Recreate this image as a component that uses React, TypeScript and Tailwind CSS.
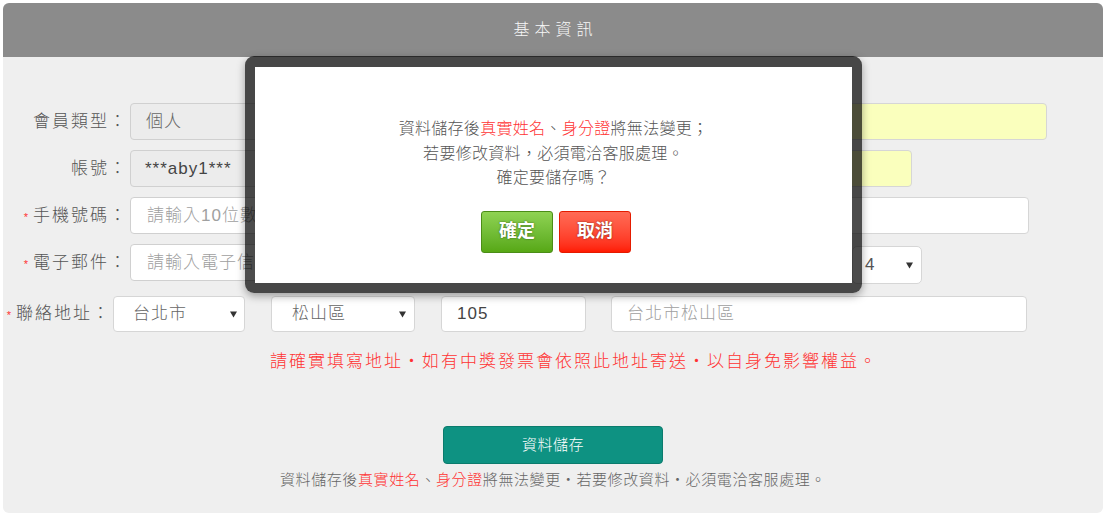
import React from "react";

const Arrow = () => (
  <svg width="7" height="7" viewBox="0 0 7 7" className="shrink-0">
    <path d="M0 0.5 H7 L3.5 6.5 Z" fill="#333" />
  </svg>
);

const Star = () => (
  <span className="text-[11px] text-[#ff3333] mr-[5px] tracking-normal">*</span>
);

export default function App() {
  return (
    <div className="relative w-[1107px] h-[516px] bg-white overflow-hidden font-light font-['Liberation_Sans','Noto_Sans_CJK_TC',sans-serif]">
      <div className="ml-[3px] mt-[3px] w-[1100px]">
        <div className="h-[54px] bg-[#8b8b8b] rounded-t-[6px] flex items-center justify-center text-[#f7f7f7] text-[16px] tracking-[5px] pl-[5px]">
          基本資訊
        </div>
        <div className="h-[456px] bg-[#efefef] rounded-b-[6px] pt-[46px]">
          {/* Row 1 */}
          <div className="flex items-center h-[37px]">
            <div className="w-[125px] shrink-0 text-right text-[17px] tracking-[2px] text-[#555]">會員類型：</div>
            <div className="ml-[2px] w-[290px] h-[37px] rounded-[4px] border border-[#d0d0d0] bg-[#ececec] flex items-center pl-[15px] text-[17px] tracking-[1px] text-[#666]">個人</div>
            <div className="ml-auto mr-[56px] w-[344px] h-[37px] rounded-[4px] border border-[#d6d6d6] bg-[#faffbd]"></div>
          </div>
          {/* Row 2 */}
          <div className="flex items-center h-[37px] mt-[10px]">
            <div className="w-[125px] shrink-0 text-right text-[17px] tracking-[2px] text-[#555]">帳號：</div>
            <div className="ml-[2px] w-[290px] h-[37px] rounded-[4px] border border-[#d0d0d0] bg-[#ececec] flex items-center pl-[14px] text-[17px] tracking-[1px] text-[#444]">***aby1***</div>
            <div className="ml-auto mr-[191px] w-[209px] h-[37px] rounded-[4px] border border-[#d6d6d6] bg-[#faffbd]"></div>
          </div>
          {/* Row 3 */}
          <div className="flex items-center h-[37px] mt-[10px]">
            <div className="w-[125px] shrink-0 text-right text-[17px] tracking-[2px] text-[#555]"><Star />手機號碼：</div>
            <div className="ml-[2px] w-[290px] h-[37px] rounded-[4px] border border-[#d0d0d0] bg-white flex items-center pl-[16px] text-[17px] tracking-[1px] text-[#a0a0a0] overflow-hidden whitespace-nowrap">請輸入10位數字手機號碼</div>
            <div className="ml-auto mr-[74px] w-[326px] h-[37px] rounded-[4px] border border-[#d6d6d6] bg-white"></div>
          </div>
          {/* Row 4 */}
          <div className="flex items-center h-[37px] mt-[10px]">
            <div className="w-[125px] shrink-0 text-right text-[17px] tracking-[2px] text-[#555]"><Star />電子郵件：</div>
            <div className="ml-[2px] w-[290px] h-[37px] rounded-[4px] border border-[#d0d0d0] bg-white flex items-center pl-[16px] text-[17px] tracking-[1px] text-[#a0a0a0] overflow-hidden whitespace-nowrap">請輸入電子信箱</div>
            <div className="ml-auto mr-[181px] mt-[5px] w-[70px] h-[38px] rounded-[5px] border border-[#d6d6d6] bg-white flex items-center justify-between pl-[12px] pr-[8px] text-[17px] text-[#555]">
              <span>4</span>
              <Arrow />
            </div>
          </div>
          {/* Row 5 */}
          <div className="flex items-center h-[36px] mt-[15px]">
            <div className="w-[108px] shrink-0 text-right text-[17px] tracking-[2px] text-[#555]"><Star />聯絡地址：</div>
            <div className="ml-[2px] w-[132px] h-[36px] rounded-[4px] border border-[#d6d6d6] bg-white flex items-center justify-between pl-[19px] pr-[7px] text-[17px] tracking-[1px] text-[#666]">
              <span>台北市</span>
              <Arrow />
            </div>
            <div className="ml-[26px] w-[144px] h-[36px] rounded-[4px] border border-[#d6d6d6] bg-white flex items-center justify-between pl-[20px] pr-[8px] text-[17px] tracking-[1px] text-[#666]">
              <span>松山區</span>
              <Arrow />
            </div>
            <div className="ml-[26px] w-[145px] h-[36px] rounded-[4px] border border-[#d6d6d6] bg-white flex items-center pl-[15px] text-[17px] tracking-[1px] text-[#444]">105</div>
            <div className="ml-[25px] w-[416px] h-[36px] rounded-[4px] border border-[#d6d6d6] bg-white flex items-center pl-[15px] text-[17px] tracking-[1px] text-[#a0a0a0]">台北市松山區</div>
          </div>
          {/* Notice */}
          <div className="mt-[18px] pl-[267px] text-[17px] leading-[24px] tracking-[2px] text-[#ff3333] whitespace-nowrap">
            請確實填寫地址‧如有中獎發票會依照此地址寄送‧以自身免影響權益。
          </div>
          {/* Save button */}
          <div className="mt-[52px] flex justify-center">
            <div className="w-[220px] h-[38px] rounded-[4px] bg-[#0e9282] border border-[#0b7b6d] flex items-center justify-center text-white text-[15px] tracking-[0.5px]">
              資料儲存
            </div>
          </div>
          <div className="mt-[6px] text-center text-[15px] leading-[20px] tracking-[0.6px] text-[#666] whitespace-nowrap">
            資料儲存後<span className="text-[#ff3333]">真實姓名</span>、<span className="text-[#ff3333]">身分證</span>將無法變更‧若要修改資料‧必須電洽客服處理。
          </div>
        </div>
      </div>

      {/* Modal */}
      <div className="absolute left-[245px] top-[56px] w-[617px] h-[237px] rounded-[9px] bg-black/70 pt-[11px] px-[10px] pb-[10px] shadow-[0_3px_8px_rgba(0,0,0,0.35)]">
        <div className="h-full bg-white flex flex-col items-center pt-[50px]">
          <div className="text-center text-[16px] leading-[24.5px] tracking-[0.3px] text-[#555]">
            資料儲存後<span className="text-[#ff3333]">真實姓名</span>、<span className="text-[#ff3333]">身分證</span>將無法變更；
            <br />
            若要修改資料，必須電洽客服處理。
            <br />
            確定要儲存嗎？
          </div>
          <div className="mt-[20px] flex gap-[6px] pl-[5px]">
            <div className="w-[72px] h-[42px] rounded-[3px] border border-[#4b8d17] bg-linear-to-b from-[#8fd352] to-[#57a814] flex items-center justify-center text-white text-[18px] font-bold [text-shadow:0_0_2px_rgba(0,0,0,0.55)]">
              確定
            </div>
            <div className="w-[72px] h-[42px] rounded-[3px] border border-[#e41b00] bg-linear-to-b from-[#ff6a55] to-[#ff1a00] flex items-center justify-center text-white text-[18px] font-bold [text-shadow:0_0_2px_rgba(0,0,0,0.55)]">
              取消
            </div>
          </div>
        </div>
      </div>
    </div>
  );
}
